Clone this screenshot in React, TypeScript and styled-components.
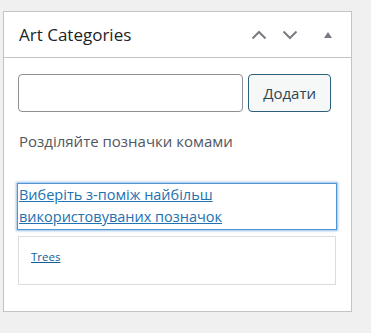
import React from 'react'
import styled, { createGlobalStyle } from 'styled-components'

const GlobalStyle = createGlobalStyle`
  html, body {
    margin: 0;
    padding: 0;
    background: #f0f0f1;
    font-family: "Open Sans", "Noto Sans", sans-serif;
  }
`

const Page = styled.div`
  padding: 11px 0 0 3px;
`

const Panel = styled.div`
  box-sizing: border-box;
  width: 349px;
  height: 301px;
  background: #fff;
  border: 1px solid #c3c4c7;
`

const Header = styled.div`
  display: flex;
  align-items: center;
  height: 45px;
  border-bottom: 1px solid #c3c4c7;
  padding: 0 0 0 15px;
`

const Title = styled.h2`
  flex: 1;
  margin: 0;
  font-size: 17px;
  font-weight: 500;
  color: #1d2327;
  padding-bottom: 1px;
`

const HandleButton = styled.button<{ $w: number }>`
  width: ${(p) => p.$w}px;
  height: 36px;
  padding: 0;
  border: 0;
  background: none;
  display: flex;
  align-items: center;
  justify-content: center;
  color: #787c82;
`

const Body = styled.div`
  padding: 16px 20px 0 14px;
`

const AddRow = styled.div`
  display: flex;
  gap: 5px;
`

const TagInput = styled.input`
  box-sizing: border-box;
  width: 226px;
  height: 38px;
  border: 1px solid #8c8f94;
  border-radius: 4px;
  background: #fff;
`

const AddButton = styled.button`
  box-sizing: border-box;
  width: 83px;
  height: 38px;
  border: 1px solid #2c5f7c;
  border-radius: 4px;
  background: #f6f7f7;
  color: #2c4654;
  font-family: inherit;
  font-size: 15px;
  padding: 0 0 1px;
`

const Hint = styled.p`
  margin: 18px 0 0 1px;
  font-size: 15px;
  color: #50575e;
  line-height: 22px;
`

const MostUsed = styled.a`
  display: block;
  box-sizing: border-box;
  width: 320px;
  margin: 31px 0 0 -1px;
  padding: 0 0 1px 1px;
  border: 1px solid #4f94d4;
  box-shadow: 0 0 2px 1px rgba(79, 148, 212, 0.6);
  font-size: 14.5px;
  line-height: 22px;
  color: #2271b1;
  text-decoration: underline;
`

const TagCloud = styled.div`
  box-sizing: border-box;
  width: 318px;
  height: 49px;
  margin-top: 6px;
  border: 1px solid #dcdcde;
  padding: 10px 12px;
  line-height: 16px;
`

const TagLink = styled.a`
  font-size: 11.5px;
  color: #135e96;
  text-decoration: underline;
`

const Chevron: React.FC<{ up?: boolean }> = ({ up }) => (
  <svg width="16" height="10" viewBox="0 0 16 10">
    <path
      d={up ? 'M1.5 8.5 L8 2 L14.5 8.5' : 'M1.5 1.5 L8 8 L14.5 1.5'}
      fill="none"
      stroke="currentColor"
      strokeWidth="2"
    />
  </svg>
)

const App: React.FC = () => {
  return (
    <>
      <GlobalStyle />
      <Page>
        <Panel>
          <Header>
            <Title>Art Categories</Title>
            <HandleButton $w={33}>
              <Chevron up />
            </HandleButton>
            <HandleButton $w={30}>
              <Chevron />
            </HandleButton>
            <HandleButton $w={46}>
              <svg width="10" height="8" viewBox="0 0 10 8">
                <path d="M1 7 L5 1 L9 7 Z" fill="currentColor" />
              </svg>
            </HandleButton>
          </Header>
          <Body>
            <AddRow>
              <TagInput />
              <AddButton>Додати</AddButton>
            </AddRow>
            <Hint>Розділяйте позначки комами</Hint>
            <MostUsed href="#">Виберіть з-поміж найбільш використовуваних позначок</MostUsed>
            <TagCloud>
              <TagLink href="#">Trees</TagLink>
            </TagCloud>
          </Body>
        </Panel>
      </Page>
    </>
  )
}

export default App
